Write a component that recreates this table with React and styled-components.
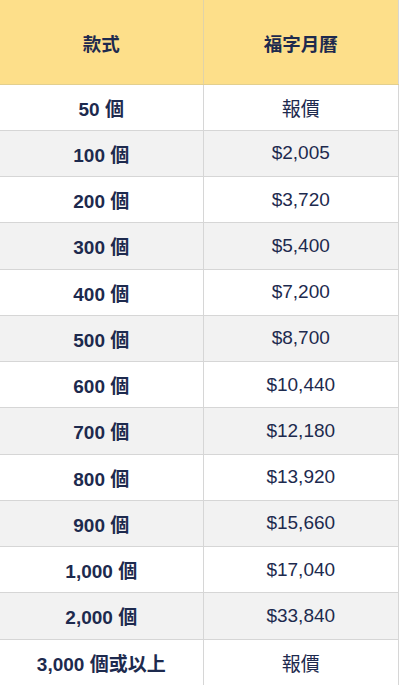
import styled, { createGlobalStyle } from 'styled-components';

const GlobalStyle = createGlobalStyle`
    html, body {
        margin: 0;
        padding: 0;
        background: #ffffff;
    }
    body {
        font-family: "Liberation Sans", Arial, "Noto Sans CJK TC", sans-serif;
    }
`

// 價目資料
const priceData = [
    { qty: "50 個", price: "報價" },
    { qty: "100 個", price: "$2,005" },
    { qty: "200 個", price: "$3,720" },
    { qty: "300 個", price: "$5,400" },
    { qty: "400 個", price: "$7,200" },
    { qty: "500 個", price: "$8,700" },
    { qty: "600 個", price: "$10,440" },
    { qty: "700 個", price: "$12,180" },
    { qty: "800 個", price: "$13,920" },
    { qty: "900 個", price: "$15,660" },
    { qty: "1,000 個", price: "$17,040" },
    { qty: "2,000 個", price: "$33,840" },
    { qty: "3,000 個或以上", price: "報價" },
];

const App = () => {
    return (
        <>
            <GlobalStyle />
            <Wrapper>
                <PriceTable>
                    <colgroup>
                        <col style={{ width: "203px" }} />
                        <col />
                    </colgroup>
                    <thead>
                        <HeadRow>
                            <HeadCell>款式</HeadCell>
                            <HeadCell>福字月曆</HeadCell>
                        </HeadRow>
                    </thead>
                    <tbody>
                        {priceData.map((row, idx) => (
                            <BodyRow key={idx} $striped={idx % 2 === 1}>
                                <QtyCell>{row.qty}</QtyCell>
                                <PriceCell>{row.price}</PriceCell>
                            </BodyRow>
                        ))}
                    </tbody>
                </PriceTable>
            </Wrapper>
        </>
    )
}
export default App;

const Wrapper = styled.div`
    width: 400px;
    height: 685px;
    overflow: hidden;
`
const PriceTable = styled.table`
    width: 399px;
    border-collapse: collapse;
    table-layout: fixed;
    color: #1d2a4e;
    font-size: 19px;
    border-right: 1px solid #d6d6d6;
`
const HeadRow = styled.tr`
    height: 84px;
    background: #fddf8a;
`
const HeadCell = styled.th`
    padding: 3px 0 0 0;
    text-align: center;
    font-weight: 700;
    font-size: 18.5px;
    font-family: "Noto Sans CJK TC", sans-serif;
    border-bottom: 1px solid #e3cf8e;
    border-right: 1px solid #e0d3a8;
    &:last-child {
        border-right: none;
    }
`
const BodyRow = styled.tr`
    height: 46.25px;
    background: ${props => props.$striped ? "#f2f2f2" : "#ffffff"};
`
const QtyCell = styled.td`
    padding: 0;
    text-align: center;
    font-weight: 700;
    border-bottom: 1px solid #d6d6d6;
    border-right: 1px solid #d6d6d6;
`
const PriceCell = styled.td`
    padding: 0;
    text-align: center;
    font-weight: 400;
    border-bottom: 1px solid #d6d6d6;
`
